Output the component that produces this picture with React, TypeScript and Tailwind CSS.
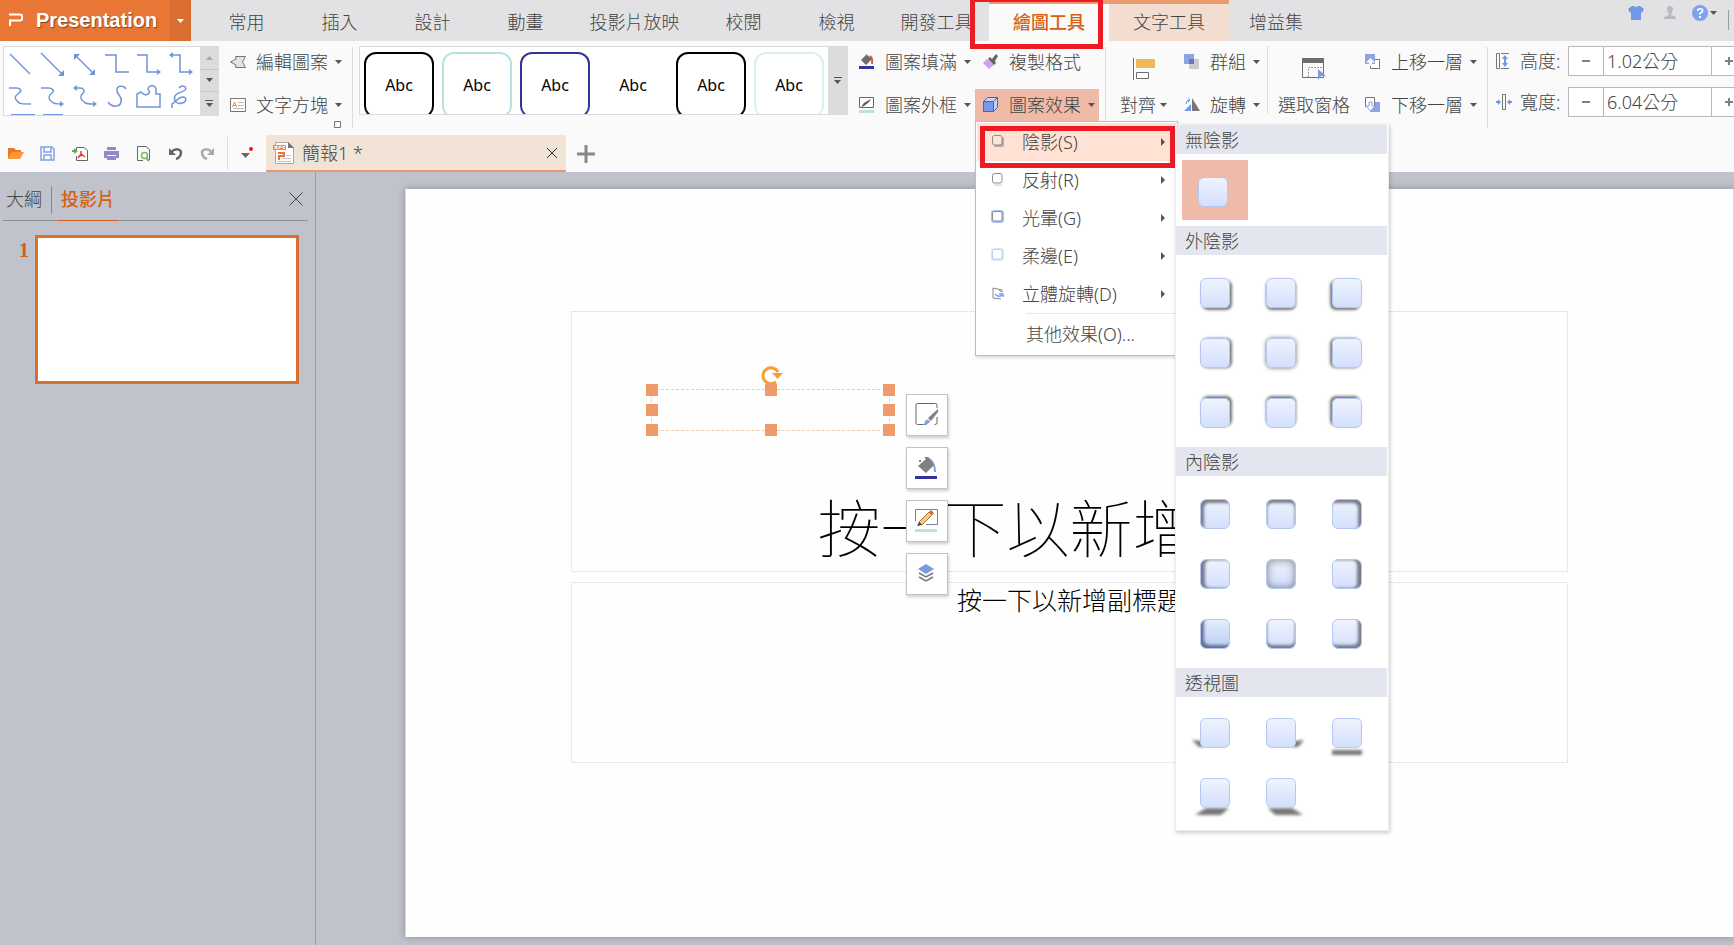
import type { ReactNode } from "react";

const tabs = [
  { label: "常用", width: "w-[93px]" },
  { label: "插入", width: "w-[93px]" },
  { label: "設計", width: "w-[93px]" },
  { label: "動畫", width: "w-[93px]" },
  { label: "投影片放映", width: "w-[125px]" },
  { label: "校閱", width: "w-[93px]" },
  { label: "檢視", width: "w-[93px]" },
  { label: "開發工具", width: "w-[107px]" },
];

const connectors = [
  { name: "直線", line: "M2 2L22 22", head: "" },
  { name: "單箭頭", line: "M1 1L22 22", head: "M24 18V24H18Z" },
  { name: "雙箭頭", line: "M4 4L21 21", head: "M2 2H8L2 8ZM23 17V23H17Z" },
  { name: "肘形接點", line: "M1 3H12V20H25", head: "" },
  { name: "肘形單箭頭接點", line: "M1 3H11V20H22", head: "M21 17L25 20L21 23Z" },
  { name: "肘形雙箭頭接點", line: "M4 3H12V20H22", head: "M5 0L1 3L5 6ZM21 17L25 20L21 23Z" },
  { name: "弧形接點", line: "M1 4H8C13 4 14 7 11 9C7 12 6 14 9 17C11 20 14 20 23 20", head: "" },
  { name: "弧形單箭頭接點", line: "M1 4H8C13 4 15 7 12 9C8 12 8 15 12 18C14 20 16 20 21 20", head: "M20 17L24 20L20 23Z" },
  { name: "弧形雙箭頭接點", line: "M4 4H8C12 4 13 7 11 9C8 12 8 15 12 18C14 20 16 20 22 20", head: "M5 1L1 4L5 7ZM21 17L25 20L21 23Z" },
  { name: "曲線", line: "M22 5C20 1 12 1 13 7C14 12 19 13 17 18C16 23 8 24 4 18", head: "" },
  { name: "手繪多邊形", line: "M1 23V10L5 8C8 11 11 12 13 9C15 7 10 6 13 3C16 0 20 2 20 6V10H24V23Z", head: "" },
  { name: "手繪曲線", line: "M11 4C14 0 20 3 17 6C14 9 9 8 7 12C5 16 9 21 14 19C19 18 19 12 14 13C9 14 8 18 4 20V24", head: "" },
];

const styles = [
  "border-black",
  "border-[#b9e0e3]",
  "border-[#33339c]",
  "border-transparent",
  "border-black",
  "border-[#d9eeee]",
];

const outerShadows = [
  "shadow-[2px_2px_3px_#777]",
  "shadow-[0_2px_3px_#777]",
  "shadow-[-2px_2px_3px_#777]",
  "shadow-[2px_0_3px_#777]",
  "shadow-[0_0_4px_#777]",
  "shadow-[-2px_0_3px_#777]",
  "shadow-[2px_-2px_3px_#777]",
  "shadow-[0_-2px_3px_#777]",
  "shadow-[-2px_-2px_3px_#777]",
];

const innerShadows = [
  "shadow-[inset_3px_3px_3px_#777c8a]",
  "shadow-[inset_0_3px_3px_#777c8a]",
  "shadow-[inset_-3px_3px_3px_#777c8a]",
  "shadow-[inset_4px_0_3px_#777c8a]",
  "shadow-[inset_0_0_8px_#777c8a]",
  "shadow-[inset_-4px_0_3px_#777c8a]",
  "shadow-[inset_3px_-3px_3px_#66718c] from-[#e3edfd]! to-[#b9cdf5]!",
  "shadow-[inset_0_-3px_3px_#777c8a]",
  "shadow-[inset_-3px_-3px_3px_#777c8a]",
];

const perspectives = [
  { name: "左上", points: "10,37 20,38 22,44 17,44" },
  { name: "右上", points: "46,38 56,37 50,44 44,44" },
  { name: "下方", points: "18,47 48,47 48,52 18,52" },
  { name: "左下", points: "24,45 47,45 39,52 13,52" },
  { name: "右下", points: "20,45 44,45 55,52 27,52" },
];

const effects = [
  { label: "陰影(S)", kind: "shadow" },
  { label: "反射(R)", kind: "reflection" },
  { label: "光暈(G)", kind: "glow" },
  { label: "柔邊(E)", kind: "soft" },
  { label: "立體旋轉(D)", kind: "rotate" },
];

const handles = [
  "left-0 top-0",
  "left-1/2 top-0",
  "left-full top-0",
  "left-0 top-1/2",
  "left-full top-1/2",
  "left-0 top-full",
  "left-1/2 top-full",
  "left-full top-full",
];

function Icon({ size = 16, className = "", children }: { size?: number; className?: string; children: ReactNode }) {
  return (
    <svg width={size} height={size} viewBox={`0 0 ${size} ${size}`} fill="none" aria-hidden="true" className={`shrink-0 ${className}`}>
      {children}
    </svg>
  );
}

function Caret() {
  return (
    <svg width="7" height="4" viewBox="0 0 7 4" aria-hidden="true" className="shrink-0">
      <path d="M0 0H7L3.5 4Z" fill="#555" />
    </svg>
  );
}

function Divider({ className }: { className: string }) {
  return <div className={`w-px shrink-0 bg-[#dcdcdc] ${className}`} />;
}

function Command({ icon, label, caret = true }: { icon: ReactNode; label: string; caret?: boolean }) {
  return (
    <button className="flex h-8 items-center">
      {icon}
      <span className="ml-2.5 mr-[7px]">{label}</span>
      {caret && <Caret />}
    </button>
  );
}

function Stepper({ id, label, value, icon }: { id: string; label: string; value: string; icon: ReactNode }) {
  return (
    <div className="flex h-[30px] items-center">
      {icon}
      <label htmlFor={id} className="ml-2 w-12 shrink-0">{label}</label>
      <div className="flex h-full shrink-0 border border-[#b9b9b9] bg-white">
        <button aria-label={`減少${label}`} className="flex w-[34px] items-center justify-center">
          <span className="h-0.5 w-2 bg-[#808080]" />
        </button>
        <input id={id} defaultValue={value} className="w-[109px] border-x border-[#b9b9b9] px-[3px] outline-none" />
        <button aria-label={`增加${label}`} className="flex w-[34px] items-center justify-center">
          <Icon size={8}><path d="M0 4H8M4 0V8" stroke="#808080" strokeWidth="2" /></Icon>
        </button>
      </div>
    </div>
  );
}

function Header() {
  return (
    <header className="flex h-[41px] bg-[#e2e2e4]">
      <button className="flex w-[170px] shrink-0 items-center bg-[#e87735] pb-0.5 pl-2 text-white">
        <Icon size={16}><path d="M1 2.500H12Q14 2.500 14 4V7Q14 8.500 12 8.500H2V14" stroke="#fff" strokeWidth="2" /></Icon>
        <span className="ml-3 font-['Liberation_Sans',sans-serif] text-xl font-bold [text-shadow:1px_1px_1px_#8a4519]">Presentation</span>
      </button>
      <button aria-label="主選單" className="flex w-[21px] shrink-0 items-center justify-center bg-[#da6d30]">
        <svg width="7" height="4" viewBox="0 0 7 4"><path d="M0 0H7L3.5 4Z" fill="#fff" /></svg>
      </button>
      <nav className="ml-[9px] flex shrink-0">
        {tabs.map((tab) => (
          <button key={tab.label} className={`${tab.width} pt-0.5`}>{tab.label}</button>
        ))}
        <button className="relative -ml-px w-[120px] border-t-4 border-[#ea9c70] bg-[#fafafa] pb-0.5 font-medium text-[#d65f16]">
          繪圖工具
          <span className="absolute -left-[19px] -top-[7px] z-10 h-[52px] w-[133px] border-5 border-[#ed1c24]" />
        </button>
        <button className="w-[120px] border-t-4 border-[#ea9c70] bg-[#f3ddd0] pb-0.5">文字工具</button>
        <button className="w-[94px] pt-0.5">增益集</button>
      </nav>
      <div className="ml-auto flex h-[26px] shrink-0 items-center pr-[5px]">
        <button aria-label="外觀">
          <Icon><path d="M0 4L4 1H6Q8 3 10 1H12L16 4L14 8L13 7V15H3V7L2 8Z" fill="#7099e3" /></Icon>
        </button>
        <button aria-label="帳戶" className="ml-[18px]">
          <Icon><path d="M8 1C11 1 12 4 10 7L9 10L14 12V14H2V12L7 10L6 7C4 4 5 1 8 1Z" fill="#b5bac3" /></Icon>
        </button>
        <button aria-label="說明" className="ml-3.5 flex items-center gap-0.5">
          <Icon>
            <circle cx="8" cy="8" r="8" fill="#7ea3ee" />
            <path d="M5.5 6Q6 3.500 8.300 3.700Q11 4 10.500 6.300Q10 7.300 8 8.300V9.500" stroke="#fff" strokeWidth="1.600" />
            <path d="M7 11H9V13H7Z" fill="#fff" />
          </Icon>
          <Caret />
        </button>
        <div className="ml-[11px] mt-3.5 h-5 w-px bg-[#9b9b9b]" />
      </div>
    </header>
  );
}

function EffectIcon({ kind }: { kind: string }) {
  if (kind === "rotate") {
    return (
      <Icon>
        <path d="M11 6V4L2 2V12L10 13M11 6L8 4" stroke="#888" />
        <path d="M4 8Q8 12 11 9M8 8H12V11" stroke="#7c9fe8" strokeWidth="1.500" />
      </Icon>
    );
  }
  const stroke = kind === "soft" ? "#b9ccf6" : "#8c8c8c";
  return (
    <Icon>
      {kind === "shadow" && <rect x="3" y="3" width="10" height="10" rx="2" fill="#b6a79f" />}
      {kind === "reflection" && <path d="M3 13H11" stroke="#c9c9c9" />}
      {kind === "glow" && <rect x="0" y="0" width="13" height="13" rx="3" fill="#aac0f0" />}
      {kind === "soft" && <rect x="0" y="0" width="13" height="13" rx="3" fill="#dbe5fb" />}
      <rect x="1.500" y="1.500" width="9.500" height="9.500" rx="2" fill={kind === "shadow" ? "#fbe3d7" : "#fff"} stroke={stroke} />
    </Icon>
  );
}

const swatch = "block size-[30px] rounded-md border border-[#b5c7f0] bg-linear-to-b from-[#eff3fe] to-[#d3dffc]";

function ShadowGroup({ title, children }: { title: string; children: ReactNode }) {
  return (
    <section>
      <h3 className="h-[29px] bg-[#e3e6ee] pl-[9px] leading-[30px]">{title}</h3>
      {children}
    </section>
  );
}

function ShadowGallery() {
  return (
    <div className="absolute left-[199px] top-0.5 w-[214px] border border-[#ededed] bg-white pb-[3px] pr-px shadow-[1px_2px_4px_#0003]">
      <ShadowGroup title="無陰影">
        <div className="px-1.5 py-1.5">
          <button aria-label="無陰影" className="flex h-[60px] w-[66px] items-center justify-center bg-[#f0baa8] pr-1 pt-1">
            <span className={swatch} />
          </button>
        </div>
      </ShadowGroup>
      <ShadowGroup title="外陰影">
        <div className="grid grid-cols-[repeat(3,66px)] px-1.5 pb-1 pt-2">
          {outerShadows.map((shadow) => (
            <button key={shadow} aria-label="外陰影" className="flex h-[60px] items-center justify-center">
              <span className={`${swatch} ${shadow}`} />
            </button>
          ))}
        </div>
      </ShadowGroup>
      <ShadowGroup title="內陰影">
        <div className="grid grid-cols-[repeat(3,66px)] px-1.5 pb-1 pt-2">
          {innerShadows.map((shadow) => (
            <button key={shadow} aria-label="內陰影" className="flex h-[60px] items-center justify-center">
              <span className={`${swatch} ${shadow}`} />
            </button>
          ))}
        </div>
      </ShadowGroup>
      <ShadowGroup title="透視圖">
        <div className="grid grid-cols-[repeat(3,66px)] px-1.5 pb-1 pt-1.5">
          {perspectives.map((item) => (
            <button key={item.name} aria-label={item.name}>
              <svg width="66" height="60" viewBox="0 0 66 60" className="block">
                <defs>
                  <linearGradient id="face" x1="0" y1="0" x2="0" y2="1">
                    <stop stopColor="#eff3fe" />
                    <stop offset="1" stopColor="#d3dffc" />
                  </linearGradient>
                  <filter id="soften" x="-40%" y="-100%" width="180%" height="300%"><feGaussianBlur stdDeviation="1.400" /></filter>
                </defs>
                <polygon points={item.points} fill="#777" filter="url(#soften)" />
                <rect x="18.500" y="15.500" width="29" height="29" rx="5" fill="url(#face)" stroke="#b5c7f0" />
              </svg>
            </button>
          ))}
        </div>
      </ShadowGroup>
    </div>
  );
}

function EffectsMenu() {
  return (
    <div className="absolute left-0 top-full z-20 w-[203px] border border-[#bdbdbd] bg-white p-px shadow-[1px_2px_3px_#0002]">
      {effects.map((effect, index) => (
        <button key={effect.label} className={`flex h-[38px] w-full items-center pl-3.5 pr-[11px] ${index === 0 ? "bg-[#ffe2d4]" : ""}`}>
          <EffectIcon kind={effect.kind} />
          <span className="ml-[15px]">{effect.label}</span>
          <svg width="4" height="8" viewBox="0 0 4 8" className="ml-auto"><path d="M0 0L4 4L0 8Z" fill="#555" /></svg>
        </button>
      ))}
      <div className="ml-[49px] h-px bg-[#e6e6e6]" />
      <button className="block h-10 pl-[49px]">其他效果(O)...</button>
      <div className="absolute left-1 top-1 h-[42px] w-[195px] border-5 border-[#ed1c24]" />
      <ShadowGallery />
    </div>
  );
}

function Ribbon() {
  return (
    <div className="flex h-[94px] items-start bg-[#fafafa] pl-[3px] pt-[5px]">
      <div className="flex h-[70px] w-[216px] shrink-0 border border-[#dcdcdc] bg-white">
        <div className="grid h-[68px] grid-cols-6 content-start overflow-hidden pl-1">
          {connectors.map((item) => (
            <button key={item.name} aria-label={item.name} className="h-8 w-8 pt-[3px]">
              <svg width="26" height="26" viewBox="0 0 26 26" fill="none">
                <path d={item.line} stroke="#7094d6" strokeWidth="1.500" />
                <path d={item.head} fill="#7094d6" />
              </svg>
            </button>
          ))}
          <span className="ml-[3px] mt-[3px] h-px w-6 bg-[#7094d6]" />
          <span className="ml-[3px] mt-[3px] h-px w-5 bg-[#7094d6]" />
        </div>
        <div className="ml-auto grid w-[18px] shrink-0 grid-rows-3 divide-y divide-[#c4c4c4] bg-[#dcdcdc]">
          <button aria-label="向上捲動" className="flex items-center justify-center">
            <svg width="7" height="4" viewBox="0 0 7 4"><path d="M0 4H7L3.500 0Z" fill="#aaa" /></svg>
          </button>
          <button aria-label="向下捲動" className="flex items-center justify-center"><Caret /></button>
          <button aria-label="更多圖案" className="flex flex-col items-center justify-center gap-0.5">
            <span className="h-px w-2 bg-[#555]" />
            <Caret />
          </button>
        </div>
      </div>

      <div className="ml-[11px] flex shrink-0 flex-col">
        <div className="flex flex-col gap-[11px]">
          <Command label="編輯圖案" icon={<Icon><path d="M5.500 2.500H15.500L12.500 8L15.500 13.500H5.500L6 11L.5 8L6 5Z" fill="#e4e4e4" stroke="#777" /></Icon>} />
          <Command
            label="文字方塊"
            icon={
              <Icon>
                <path d="M.5 1.500H15.500V14.500H.5Z" fill="#fff" stroke="#777" />
                <path d="M2.500 10L4.500 5L6.500 10M3.500 8.500H5.500" stroke="#e58746" />
                <path d="M8 5.500H14M8 8.500H14M3 11.500H14" stroke="#bbb" />
              </Icon>
            }
          />
        </div>
        <button aria-label="圖案設定" className="mr-px self-end">
          <Icon size={7}><path d="M.5.5H6.500V6.500H.5Z" stroke="#777" /></Icon>
        </button>
      </div>
      <Divider className="ml-2.5 mr-1.5 mt-px h-[81px]" />

      <div className="flex h-[69px] shrink-0 border border-[#dcdcdc] bg-white">
        <div className="flex gap-2 overflow-hidden pl-1 pr-1 pt-[5px]">
          {styles.map((style, index) => (
            <button key={index} className={`h-[66px] w-[70px] shrink-0 rounded-xl border-2 text-base font-normal text-black ${style}`}>Abc</button>
          ))}
        </div>
        <button aria-label="更多樣式" className="flex w-[19px] flex-col items-center justify-center gap-0.5 bg-[#dcdcdc]">
          <span className="h-px w-2 bg-[#555]" />
          <Caret />
        </button>
      </div>

      <div className="ml-[11px] flex shrink-0 flex-col gap-[11px]">
        <Command
          label="圖案填滿"
          icon={
            <Icon>
              <path d="M11 2Q14 4 13 10" stroke="#e2574c" strokeWidth="2" />
              <path d="M2 6L7 1V0L13 5L7 11Z" fill="#6d6d6d" />
              <path d="M0 12H15V15H0Z" fill="#33339c" />
            </Icon>
          }
        />
        <Command
          label="圖案外框"
          icon={
            <Icon>
              <path d="M.5 .5H14.500V10.500H.5Z" fill="#fff" stroke="#666" />
              <path d="M2 10L5 6L12 2L10 5L5 9Z" fill="#555" />
              <path d="M0 13H15V16H0Z" fill="#b9e0e3" />
            </Icon>
          }
        />
      </div>

      <div className="ml-1 flex shrink-0 flex-col gap-[11px]">
        <div className="pl-2">
          <Command
            label="複製格式"
            caret={false}
            icon={
              <Icon>
                <path d="M0 9L4 5L11 11L6 15Z" fill="#cfa2ef" />
                <path d="M5 5L7 3L9 5L13 0L15 2L12 7L13 9L11 11Z" fill="#666" />
              </Icon>
            }
          />
        </div>
        <div className="relative">
          <button aria-expanded="true" className="flex h-8 items-center bg-[#f0baa8] pl-2 pr-1">
            <Icon>
              <path d="M.5 4.500L4.500 .5H14.500V10.500L10.500 14.500H.5Z" fill="#c3d3f8" stroke="#4d659c" />
              <path d="M.5 4.500H10.500V14.500H.5Z" fill="#789ae6" stroke="#4d659c" />
              <path d="M10.500 4.500L14.500 .5" stroke="#4d659c" />
            </Icon>
            <span className="ml-2.5 mr-[7px]">圖案效果</span>
            <Caret />
          </button>
          <EffectsMenu />
        </div>
      </div>
      <Divider className="ml-1.5 mt-px h-[75px]" />

      <button className="ml-3.5 mt-3 flex shrink-0 flex-col">
        <svg width="24" height="23" viewBox="0 0 24 23" fill="none" className="ml-3">
          <path d="M1.500 0V22" stroke="#6d6d6d" />
          <path d="M4 1H23V10H4Z" fill="#f4b755" />
          <path d="M4.500 14.500H16.500V20.500H4.500Z" fill="#fff" stroke="#6d6d6d" />
        </svg>
        <span className="mt-2 flex h-8 items-center gap-1">對齊<Caret /></span>
      </button>
      <div className="ml-[17px] flex shrink-0 flex-col gap-[11px]">
        <Command
          label="群組"
          icon={
            <Icon>
              <path d="M5 5H15V15H5Z" fill="#ccc" />
              <path d="M0 0H10V10H0Z" fill="#8ea3e6" />
              <path d="M5 5H10V10H5Z" fill="#6b7bb0" />
            </Icon>
          }
        />
        <Command
          label="旋轉"
          icon={
            <Icon>
              <path d="M8 1L16 14H8Z" fill="#777" />
              <path d="M7 7V14H0Z" fill="#6f99e6" />
              <path d="M2 7Q2 3 6 3M4 1L6 3L4 5" stroke="#6f99e6" />
            </Icon>
          }
        />
      </div>
      <Divider className="ml-[7px] h-[68px]" />

      <button className="ml-2.5 mt-3 flex shrink-0 flex-col">
        <svg width="24" height="23" viewBox="0 0 24 23" fill="none" className="ml-6">
          <path d="M.5 .5H21.500V19.500H.5Z" stroke="#6d6d6d" />
          <path d="M0 0H22V5H0Z" fill="#6d6d6d" />
          <path d="M6.500 19V9.500H21" stroke="#999" strokeDasharray="2 1" />
          <path d="M16 11L24 18H19L16 22Z" fill="#8098df" />
        </svg>
        <span className="mt-2 flex h-8 items-center">選取窗格</span>
      </button>
      <div className="ml-[15px] flex shrink-0 flex-col gap-[11px]">
        <Command
          label="上移一層"
          icon={
            <Icon>
              <path d="M8.500 5.500H14.500V14.500H5.500V10" stroke="#777" fill="#fff" />
              <path d="M0 0H10V10H0Z" fill="#8ea3e6" />
              <path d="M1 8.500L5.500 4L10 8.500H7V12H4V8.500Z" fill="#fff" />
            </Icon>
          }
        />
        <Command
          label="下移一層"
          icon={
            <Icon>
              <path d="M5 5H15V15H5Z" fill="#8ea3e6" />
              <path d="M.5 .5H9.500V9.500H.5Z" fill="#fff" stroke="#777" />
              <path d="M4 5H7V9H10L5.500 14L1 9H4Z" fill="#fff" stroke="#8ea3e6" />
            </Icon>
          }
        />
      </div>
      <Divider className="ml-2.5 mt-px h-[81px]" />

      <div className="ml-2 flex shrink-0 flex-col gap-[11px]">
        <Stepper
          id="height"
          label="高度:"
          value="1.02公分"
          icon={
            <Icon>
              <path d="M.5 .5H3.500V15.500H.5ZM5 .5H13M5 15.500H13" stroke="#777" />
              <path d="M9 4V12" stroke="#6f99e6" strokeWidth="2" />
              <path d="M6 6L9 2L12 6ZM6 10L9 14L12 10Z" fill="#6f99e6" />
            </Icon>
          }
        />
        <Stepper
          id="width"
          label="寬度:"
          value="6.04公分"
          icon={
            <Icon>
              <path d="M6.500 .5H9.500V15.500H6.500Z" stroke="#777" />
              <path d="M0 8H3M16 8H13" stroke="#6f99e6" strokeWidth="2" />
              <path d="M2 5L5 8L2 11ZM14 5L11 8L14 11Z" fill="#6f99e6" />
            </Icon>
          }
        />
      </div>
    </div>
  );
}

function QuickBar() {
  return (
    <div className="flex h-[37px] items-center bg-[#fafafa] pl-2">
      <div className="flex shrink-0 gap-4">
        <button aria-label="開啟">
          <Icon>
            <path d="M0 13V2H6L8 4H13V7H4Z" fill="#e8791f" />
            <path d="M4 6H16L12 13H0Z" fill="#fb9a3c" />
          </Icon>
        </button>
        <button aria-label="儲存">
          <Icon>
            <path d="M1 1H12L14 3V14H1Z" stroke="#7ea3ee" strokeWidth="1.500" />
            <path d="M4 1V6H11V1M4 14V9H11V14" stroke="#7ea3ee" strokeWidth="1.500" />
          </Icon>
        </button>
        <button aria-label="匯出 PDF">
          <Icon>
            <path d="M4.500 4V1.500H12L15.500 4.500V14.500H4.500V10" stroke="#666" fill="#fff" />
            <path d="M0 5H3" stroke="#6aa84f" strokeWidth="2" />
            <path d="M2 2L6 5L2 8Z" fill="#6aa84f" />
            <path d="M9 5V8L6 12M9 8L13 11M7 10L11 9" stroke="#d9382f" strokeWidth="1.500" />
          </Icon>
        </button>
        <button aria-label="列印">
          <Icon>
            <path d="M3 1H12V4H3ZM0 5H15V12H12V9H3V12H0Z" fill="#8f8bc9" />
            <path d="M3 10H12V14H3Z" fill="#8f8bc9" />
          </Icon>
        </button>
        <button aria-label="預覽列印">
          <Icon>
            <path d="M7 14.500H1.500V.5H10L13.500 3.500V14" stroke="#666" />
            <circle cx="8.500" cy="9.500" r="3" fill="#fff" stroke="#7bb662" strokeWidth="1.500" />
            <path d="M10 12L13 15" stroke="#7bb662" strokeWidth="2" />
          </Icon>
        </button>
        <button aria-label="復原">
          <Icon>
            <path d="M3 6C8 2 12 3 13 6C13 9 11 12 8 13" stroke="#666" strokeWidth="2.500" />
            <path d="M1 2V9H8Z" fill="#666" />
          </Icon>
        </button>
        <button aria-label="取消復原">
          <Icon>
            <path d="M12 6C7 2 3 3 2 6C2 9 4 12 7 13" stroke="#aaa" strokeWidth="2.500" />
            <path d="M14 2V9H7Z" fill="#aaa" />
          </Icon>
        </button>
      </div>
      <Divider className="ml-[11px] h-[33px]" />
      <button aria-label="自訂工具列" className="ml-[13px]">
        <Icon>
          <path d="M0 7H9L4.500 12Z" fill="#666" />
          <circle cx="10" cy="3" r="2" fill="#f11" />
        </Icon>
      </button>
      <div className="ml-[9px] flex h-full w-[300px] shrink-0 items-center border-b-2 border-[#ea9a6e] bg-[#f1e4d6] pl-[7px] pr-2">
        <Icon size={22}>
          <path d="M2.500 .5H15L20.500 5.500V21.500H2.500Z" fill="#fff" stroke="#aaa" />
          <path d="M15 0V6H21Z" fill="#777" />
          <path d="M0 3H13V8H0Z" fill="#ef8a4d" />
          <path d="M2 4.500H4V6.500H2ZM6 7V4.500H8V6M12 4.500H10V6.500H12" stroke="#fff" />
          <path d="M5 11H11V14H6V18" stroke="#e8743a" strokeWidth="2" />
          <path d="M13 13.500H18M10 16.500H18M5 19.500H18" stroke="#c4c4c4" />
        </Icon>
        <span className="ml-[7px]">簡報1 *</span>
        <button aria-label="關閉簡報" className="ml-auto">
          <Icon size={12}><path d="M1 1L11 11M11 1L1 11" stroke="#333" /></Icon>
        </button>
      </div>
      <button aria-label="新增簡報" className="ml-[11px]">
        <Icon size={18}><path d="M0 9H18M9 0V18" stroke="#888" strokeWidth="3" /></Icon>
      </button>
    </div>
  );
}

function SlidePanel() {
  return (
    <aside className="w-[316px] shrink-0 border-r border-[#9c9fa9] pl-[3px] pr-[7px] pt-2.5">
      <div className="flex h-[39px] items-start border-b border-[#8d9099]">
        <button className="h-[34px] w-12 pl-[3px] text-left">大綱</button>
        <div className="mt-1 h-7 w-px bg-[#84868e]" />
        <button className="-mb-px ml-1.5 h-[39px] w-[60px] border-b border-[#d65f16] pb-1 font-medium text-[#d65f16]">投影片</button>
        <button aria-label="關閉窗格" className="ml-auto mr-[5px] mt-2.5">
          <Icon size={14}><path d="M.5 .5L13.500 13.500M13.500 .5L.5 13.500" stroke="#444" /></Icon>
        </button>
      </div>
      <div className="mt-3.5 flex">
        <span className="w-8 pl-4 font-['Liberation_Serif',serif] text-xl font-bold leading-[30px] text-[#d65f16]">1</span>
        <button aria-label="投影片 1" className="h-[149px] w-[264px] border-3 border-[#d86f2c] bg-white" />
      </div>
    </aside>
  );
}

function FloatingTools() {
  const box = "flex size-[42px] items-center justify-center border border-[#c3c3c3] bg-white shadow-[1px_2px_3px_#0003]";
  return (
    <div className="absolute left-[37.700%] top-[27.400%] flex flex-col gap-[11px]">
      <button aria-label="樣式" className={box}>
        <Icon size={24}>
          <path d="M12 22.500H3Q1.500 22.500 1.500 21V3Q1.500 1.500 3 1.500H21Q22.500 1.500 22.500 3V6M22.500 15V21Q22.500 22.500 20 22.500" transform="translate(-.5 -1)" stroke="#666" />
          <path d="M13 15L23 6V9L16 18Z" fill="#808080" />
          <path d="M7 22Q10 21 10 18Q13 15 15 18Q14 22 7 22Z" fill="#7ea3ee" />
        </Icon>
      </button>
      <button aria-label="填滿" className={box}>
        <Icon size={24}>
          <path d="M13 2Q20 6 20 16" stroke="#7c9fe0" strokeWidth="2" />
          <path d="M3 10L11 3L9 1H13L19 9L11 17Z" fill="#808080" />
          <path d="M4 4H6V6H4Z" fill="#808080" />
          <path d="M0 20H22V23H0Z" fill="#33339c" />
        </Icon>
      </button>
      <button aria-label="外框" className={box}>
        <Icon size={24}>
          <path d="M.5 12V.5H22.500V15.500H11" stroke="#6a82a8" />
          <path d="M4 13L14 3L17 6L7 16Z" fill="#f7cb7d" stroke="#a8763a" />
          <path d="M14 3L16 1L19 4L17 6Z" fill="#e0603c" />
          <path d="M4 13L2 17L7 16Z" fill="#444" />
          <path d="M0 20H22V23H0Z" fill="#b9e0e3" />
        </Icon>
      </button>
      <button aria-label="圖層" className={box}>
        <Icon size={24}>
          <path d="M11 2L19 7L11 12L3 7Z" fill="#759be4" />
          <path d="M4 11L11 15L18 11M4 15L11 19L18 15" stroke="#777" strokeWidth="1.500" />
        </Icon>
      </button>
    </div>
  );
}

function Slide() {
  return (
    <main className="min-w-0 flex-1 pb-[9px] pl-[89px] pt-[17px]">
      <div className="relative flex aspect-video flex-col gap-2.5 border-x border-[#d9dae0] bg-[#fefefe] px-[12.400%] pt-[9.200%] text-center text-black shadow-[0_0_8px_#0004]">
        <div className="flex h-[261px] items-end justify-center border border-dotted border-[#d2d2d2] pb-[7px]">
          <h1 className="whitespace-nowrap text-[63px] font-thin leading-[72px]">按一下以新增標題</h1>
        </div>
        <div className="h-[181px] border border-dotted border-[#d2d2d2]">
          <p className="text-[25px] font-light leading-[34px]">按一下以新增副標題</p>
        </div>

        <div className="absolute left-[18.500%] top-[26.800%] h-[42px] w-[239px] border border-dashed border-[#f5c8ae]">
          <Icon size={24} className="absolute -top-[26px] left-[107px]">
            <path d="M17 18A8 8 0 1 1 19 8" stroke="#f5a02e" strokeWidth="3" />
            <path d="M13 9H24L18.500 15Z" fill="#f5a02e" />
          </Icon>
          {handles.map((place) => (
            <span key={place} className={`absolute size-3 -translate-x-1/2 -translate-y-1/2 bg-[#f09a69] ${place}`} />
          ))}
        </div>
        <FloatingTools />
      </div>
    </main>
  );
}

export default function App() {
  return (
    <div className="flex min-h-screen flex-col overflow-hidden whitespace-nowrap bg-[#c0c3cc] font-['Noto_Sans','Noto_Sans_CJK_TC',sans-serif] text-lg font-light text-[#444]">
      <Header />
      <Ribbon />
      <QuickBar />
      <div className="flex flex-1">
        <SlidePanel />
        <Slide />
      </div>
    </div>
  );
}
